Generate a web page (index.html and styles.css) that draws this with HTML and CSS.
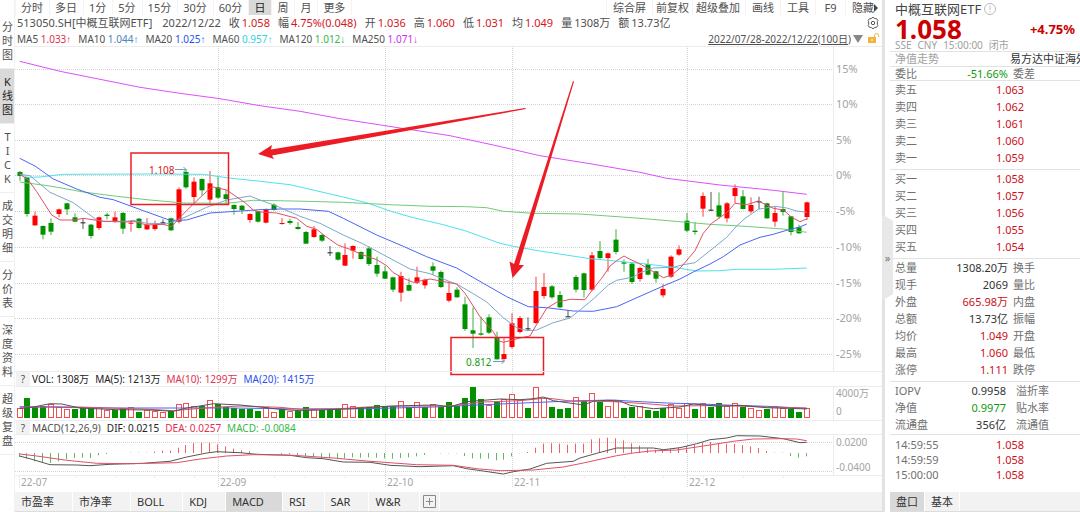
FILE: index.html
```html
<!DOCTYPE html>
<html lang="zh-CN">
<head>
<meta charset="utf-8">
<title>513050.SH 中概互联网ETF</title>
<link rel="stylesheet" href="styles.css">
</head>
<body>
<div class="app">
  <nav class="rail" aria-label="视图">
    <button class="rail-item rail-first">分时图</button>
    <button class="rail-item active">K线图</button>
    <button class="rail-item rail-latin">TICK</button>
    <button class="rail-item">成交明细</button>
    <button class="rail-item">分价表</button>
    <button class="rail-item">深度资料</button>
    <button class="rail-item">超级复盘</button>
  </nav>

  <main class="main">
    <div class="toolbar">
      <div class="periods">
        <button>分时</button><button>多日</button><button>1分</button><button>5分</button><button>15分</button><button>30分</button><button>60分</button><button class="active">日</button><button>周</button><button>月</button><button class="last">更多</button>
      </div>
      <div class="tools">
        <button>综合屏</button><button class="tight">前复权</button><button class="snug">超级叠加</button><button>画线</button><button>工具</button><button class="key">F9</button><button class="hide">隐藏<svg class="caret" viewBox="0 0 4 8" aria-hidden="true"><path d="M0 0L4 4L0 8z"/></svg></button>
      </div>
    </div>

    <div class="quote">
      <span class="symbol">513050.SH[中概互联网ETF]</span>
      <span class="date">2022/12/22</span>
      <span>收<b>1.058</b></span>
      <span>幅<b>4.75%(0.048)</b></span>
      <span>开<b>1.036</b></span>
      <span>高<b>1.060</b></span>
      <span>低<b>1.031</b></span>
      <span>均<b>1.049</b></span>
      <span>量<i>1308万</i></span>
      <span>额<i>13.73亿</i></span>
      <button class="gear" aria-label="设置"><svg viewBox="0 0 12 12"><path d="M4.2 1.7L5 .6h2l.8 1.1 1.7-.1 1.4 2-.6 1.1v2.6l.6 1.1-1.4 2-1.7-.1L7 11.4H5l-.8-1.1-1.7.1-1.4-2 .6-1.1V4.700L1.100 3.600l1.400-2z"/><circle cx="6" cy="6" r="1.700"/></svg></button>
    </div>

    <div class="averages">
      <span>MA5 <b class="ma5">1.033↑</b></span>
      <span>MA10 <b class="ma10">1.044↑</b></span>
      <span>MA20 <b class="ma20">1.025↑</b></span>
      <span>MA60 <b class="ma60">0.957↑</b></span>
      <span>MA120 <b class="ma120">1.012↓</b></span>
      <span>MA250 <b class="ma250">1.071↓</b></span>
      <div class="range">
        <button class="range-text">2022/07/28-2022/12/22(100日)</button>
        <svg class="drop" viewBox="0 0 10 8" aria-hidden="true"><path d="M0 0h10L5 8z"/></svg>
        <svg class="lock" viewBox="0 0 12 11" aria-hidden="true"><rect x="0" y="4" width="8" height="6" fill="#f5b13d"/><path d="M6.500 4V2.500a2 2 0 0 1 4 0V4" fill="none" stroke="#f5b13d"/><path d="M3.500 6h1v2h-1z" fill="#fff"/></svg>
      </div>
    </div>

    <svg class="pane" id="price" viewBox="15 46 867 325" role="img" aria-label="K线图">
      <g class="frame"><path d="M15 46.500H882M833.500 46V371"/></g>
      <g class="grid">
        <path d="M15 69.500H833M15 104.500H833M15 140.500H833M15 175.500H833M15 211.500H833M15 247.500H833M15 283.500H833M15 318.500H833M15 354.500H833"/>
        <path d="M218.500 46V371M385.500 46V371M512.500 46V371M687.500 46V371"/>
      </g>
      <g class="axis">
        <text x="836" y="73">15%</text><text x="836" y="108">10%</text><text x="836" y="144">5%</text><text x="836" y="179">0%</text><text x="836" y="215">-5%</text><text x="836" y="251">-10%</text><text x="836" y="287">-15%</text><text x="836" y="322">-20%</text><text x="836" y="358">-25%</text>
      </g>
      <g id="candles"></g>
      <g id="price-lines"></g>
      <g class="mark"><text class="high" x="149" y="174">1.108</text><path d="M175 169.500h11M183.500 167l2.500 2.500-2.500 2.500"/><text class="low" x="466" y="366">0.812</text><path d="M493 361.500h11M501.500 359l2.500 2.500-2.500 2.500"/></g>
      <g class="note-box"><rect x="131" y="153" width="97.500" height="51.500"/><rect x="451" y="337.500" width="92.500" height="37"/></g>
      <g class="note-arrow"><path d="M258 154L272 145L271 149.500L525 108L526 109L272 155.500L274 159z"/><path d="M512.500 278L509.500 261.500L514 264L573 81L574 81.500L519 265L524 265z"/></g>
    </svg>

    <div class="legend"><button class="help" aria-label="帮助">?</button><span class="ink">VOL: 1308万</span><span class="ink">MA(5): 1213万</span><span class="ma5">MA(10): 1299万</span><span class="ma20">MA(20): 1415万</span></div>

    <svg class="pane" id="volume" viewBox="15 386 867 34" role="img" aria-label="成交量">
      <g class="frame"><path d="M15 386.500H882M833.500 386V420"/></g>
      <g class="grid"><path d="M218.500 386V420M385.500 386V420M512.500 386V420M687.500 386V420"/></g>
      <g id="bars"></g>
      <g id="volume-lines"></g>
      <g class="axis"><text x="836" y="397">4000万</text><text x="836" y="415">0</text></g>
    </svg>

    <div class="legend"><button class="help" aria-label="帮助">?</button><span>MACD(12,26,9)</span><span class="ink">DIF: 0.0215</span><span class="ma5">DEA: 0.0257</span><span class="ma120">MACD: -0.0084</span></div>

    <svg class="pane" id="macd" viewBox="15 434 867 58" role="img" aria-label="MACD">
      <g class="frame"><path d="M15 434.500H882M833.500 434V475M15 475.500H882M19.500 475v13M75.500 475v3M115.500 475v3M154.500 475v3M194.500 475v3M234.500 475v3M274.500 475v3M305.500 475v3M345.500 475v3M425.500 475v3M464.500 475v3M504.500 475v3M544.500 475v3M584.500 475v3M624.500 475v3M663.500 475v3M703.500 475v3M743.500 475v3M783.500 475v3"/></g>
      <g class="grid"><path d="M15 442.500H833M15 471.500H833M218.500 434V488M385.500 434V488M512.500 434V488M687.500 434V488"/></g>
      <g id="sticks"></g>
      <g id="macd-lines"></g>
      <g class="axis"><text x="836" y="446">0.0200</text><text x="836" y="471">-0.0400</text><text x="21" y="486">22-07</text><text x="220" y="486">22-09</text><text x="387" y="486">22-10</text><text x="514" y="486">22-11</text><text x="689" y="486">22-12</text></g>
    </svg>

    <div class="tabs">
      <button>市盈率</button><button>市净率</button><button>BOLL</button><button>KDJ</button><button class="active">MACD</button><button>RSI</button><button>SAR</button><button>W&amp;R</button><button class="add" aria-label="添加指标"><svg viewBox="0 0 13 13"><path d="M.5.5h12v12H.5zM6.500 3v7M3 6.500h7"/></svg></button>
    </div>
  </main>

  <div class="divider"><button class="collapse" aria-label="收起">»</button></div>

  <aside class="side">
    <header class="head">
      <h1>中概互联网ETF <svg class="info" viewBox="0 0 12 12" aria-hidden="true"><circle cx="6" cy="6" r="5.500"/><path d="M6 2.500v4.500M6 8.200v1.300"/></svg></h1>
      <div class="last-price"><strong>1.058</strong><em>+4.75%</em></div>
      <p class="status"><span>SSE</span><span>CNY</span><span>15:00:00</span><span>闭市</span></p>
    </header>
    <div class="fund"><span>净值走势</span><a href="#fund">易方达中证海外</a></div>
    <table class="stats ratio"><tr><th>委比</th><td class="down">-51.66%</td><th>委差</th></tr></table>
    <table class="book">
      <tr><th>卖五</th><td>1.063</td></tr><tr><th>卖四</th><td>1.062</td></tr><tr><th>卖三</th><td>1.061</td></tr><tr><th>卖二</th><td>1.060</td></tr><tr><th>卖一</th><td>1.059</td></tr>
    </table>
    <table class="book">
      <tr><th>买一</th><td>1.058</td></tr><tr><th>买二</th><td>1.057</td></tr><tr><th>买三</th><td>1.056</td></tr><tr><th>买四</th><td>1.055</td></tr><tr><th>买五</th><td>1.054</td></tr>
    </table>
    <table class="stats">
      <tr><th>总量</th><td>1308.20万</td><th>换手</th></tr>
      <tr><th>现手</th><td>2069</td><th>量比</th></tr>
      <tr><th>外盘</th><td class="up">665.98万</td><th>内盘</th></tr>
      <tr><th>总额</th><td>13.73亿</td><th>振幅</th></tr>
      <tr><th>均价</th><td class="up">1.049</td><th>开盘</th></tr>
      <tr><th>最高</th><td class="up">1.060</td><th>最低</th></tr>
      <tr><th>涨停</th><td class="up">1.111</td><th>跌停</th></tr>
    </table>
    <table class="stats nav-stats">
      <tr><th>IOPV</th><td>0.9958</td><th>溢折率</th></tr>
      <tr><th>净值</th><td class="down">0.9977</td><th>贴水率</th></tr>
      <tr><th>流通盘</th><td>356亿</td><th>流通值</th></tr>
    </table>
    <table class="book trades">
      <tr><th>14:59:55</th><td>1.058</td></tr><tr><th>14:59:59</th><td>1.058</td></tr><tr><th>15:00:00</th><td>1.058</td></tr>
    </table>
    <div class="tabs side-tabs"><button class="active">盘口</button><button>基本</button></div>
  </aside>
</div>
<script src="chart.js"></script>
</body>
</html>
```
FILE: styles.css
```css
* { box-sizing: border-box; }
body {
  margin: 0;
  background: #fff;
  color: #505050;
  font: 11px/14px "Noto Sans", "Liberation Sans", "Noto Sans CJK SC", sans-serif;
}
button {
  margin: 0;
  padding: 0;
  border: 0;
  background: none;
  color: inherit;
  font: inherit;
  cursor: pointer;
  white-space: nowrap;
}
b, i, em { font-weight: 400; font-style: normal; }
a { color: inherit; text-decoration: none; }
.app { display: flex; min-height: 100vh; overflow: hidden; }

.rail {
  flex: 0 0 15px;
  min-width: 0;
  display: flex;
  flex-direction: column;
  border-right: 1px solid #f2f2f2;
}
.rail-item {
  padding: 6px 1px 6px 2px;
  border-bottom: 1px solid #eee;
  line-height: 14px;
  white-space: normal;
  overflow-wrap: anywhere;
}
.rail-first { padding-top: 20px; }
.rail-latin { padding-left: 4px; padding-right: 3px; }
.rail-item.active { background: #d9d9d9; color: #222; }

.main { flex: 1; min-width: 0; display: flex; flex-direction: column; }
.toolbar { display: flex; justify-content: space-between; height: 15px; }
.periods, .tools { display: flex; }
.toolbar button { padding: 0 6px; line-height: 15px; border-left: 1px solid #f4f4f4; }
.toolbar .periods button { padding: 0 6px 0 5px; }
.periods .last { border-right: 1px solid #f4f4f4; }
.toolbar .active { background: #d9d9d9; color: #222; }
.toolbar .tight { padding: 0 3px; }
.toolbar .snug { padding: 0 5px 0 3px; }
.toolbar .key { min-width: 30px; }
.toolbar .hide { padding-right: 4px; }
.caret { width: 4px; height: 8px; fill: #444; }

.quote { display: flex; align-items: center; gap: 8px; height: 16px; padding: 0 3px 0 2px; white-space: nowrap; }
.quote b { margin-left: 2px; color: #d4161c; }
.quote i { margin-left: 2px; }
.symbol { margin-right: 2px; }
.gear { margin-left: auto; width: 12px; height: 12px; }
.gear svg { display: block; fill: none; stroke: #555; }

.averages { display: flex; align-items: center; gap: 7px; height: 15px; padding: 0 2px; font-size: 10px; white-space: nowrap; }
.range { display: flex; align-items: center; gap: 2px; margin-left: auto; }
.range-text { text-decoration: underline; }
.drop { width: 10px; height: 8px; fill: #888; }
.lock { width: 12px; height: 11px; margin-left: 3px; }
.ma5 { color: #df3050; }
.ma10 { color: #4a86b8; }
.ma20 { color: #2a50f0; }
.ma60 { color: #30d0e0; }
.ma120 { color: #38b848; }
.ma250 { color: #d030f0; }
.ink { color: #222; }

.pane { display: block; width: 100%; height: auto; overflow: visible; }
.pane text { font-size: 11px; }
.frame path { fill: none; stroke: #ececec; }
.grid path { fill: none; stroke: #d4d4d4; stroke-dasharray: 1 1; }
.axis text { fill: #a4a4a4; }
#volume .axis text, #macd .axis text { font-size: 10px; }
.up-candle { fill: #fe0000; stroke: none; }
.down-candle { fill: #009000; stroke: none; }
.flat-candle { fill: #222; stroke: none; }
.hollow { fill: #fff; stroke: #f25050; }
.stick-up { fill: #f06060; }
.stick-down { fill: #60b860; }
.line { fill: none; stroke-width: 1; stroke-linejoin: round; }
.line-ma5 { stroke: #df5068; }
.line-ma10 { stroke: #7ba8cc; }
.line-ma20 { stroke: #4a66f4; }
.line-ma60 { stroke: #50e0ec; }
.line-ma120 { stroke: #70cc78; }
.line-ma250 { stroke: #dc50fa; }
.line-ink { stroke: #555; }
.mark path { fill: none; stroke: #6f9cc0; }
.mark .high { fill: #d4161c; }
.mark .low { fill: #189a18; }
.pane .mark text { font-size: 10px; }
.note-box rect { fill: none; stroke: #ed1c24; stroke-width: 1.5; }
.note-arrow path { fill: #ed1c24; }

.legend { display: flex; align-items: center; gap: 6px; height: 15px; border-top: 1px solid #ececec; font-size: 10px; white-space: nowrap; }
.legend + #macd { margin-top: -1px; }
.help { width: 14px; height: 14px; margin: 0 -4px 0 1px; background: #f2f2f2; line-height: 14px; }

.tabs { display: flex; height: 20px; margin-top: auto; background: #f2f2f2; border-bottom: 1px solid #ddd; color: #333; }
.tabs button { padding: 0 18px 0 6px; border-right: 1px solid #fff; }
.tabs .active { background: #d9d9d9; }
.tabs .add { padding: 0 3px; }
.add svg { display: block; width: 13px; height: 13px; fill: none; stroke: #888; }

.divider { position: relative; flex: 0 0 8px; border-left: 3px solid #e2e2e2; }
.collapse {
  position: absolute;
  left: -3px;
  top: 216px;
  width: 11px;
  height: 83px;
  background: #e8e8e8;
  clip-path: polygon(0 0, 27% 0, 100% 6%, 100% 94%, 27% 100%, 0 100%);
  color: #777;
}

.side { flex: 0 0 190px; display: flex; flex-direction: column; overflow: hidden; white-space: nowrap; }
.head { height: 52px; padding-left: 5px; border-bottom: 1px solid #e2e2e2; }
.head h1 { display: flex; align-items: center; gap: 3px; margin: 0; font-size: 13px; line-height: 18px; font-weight: 400; color: #444; }
.info { width: 12px; height: 12px; fill: none; stroke: #bbb; }
.last-price { display: flex; align-items: center; justify-content: space-between; height: 21px; padding-right: 5px; color: #cc0000; }
.last-price strong { font-size: 26px; line-height: 20px; }
.last-price em { font-size: 13px; font-weight: 700; }
.status { display: flex; gap: 6px; margin: 0; color: #a0a0a0; font-size: 10px; line-height: 12px; }
.fund { display: flex; height: 15px; padding-left: 5px; border-bottom: 1px solid #e2e2e2; color: #a0a0a0; }
.fund span { flex: 0 0 115px; }
.fund a { color: #333; }
.side table { width: 100%; table-layout: fixed; border-spacing: 0; border-bottom: 1px solid #e2e2e2; padding: 0 0 3px 5px; }
.side th, .side td { height: 17px; padding: 0; font-weight: 400; text-align: left; line-height: 17px; }
.side th { color: #707070; }
.stats th:first-child { width: 40px; }
.stats td { width: 73px; color: #333; }
.side .stats td { text-align: right; }
.side .stats th:last-child { padding-left: 5px; }
.side .stats .up, .book td { color: #cc1018; }
.side .stats .down { color: #109a10; }
.side .ratio { padding-bottom: 0; }
.side .ratio th, .side .ratio td { height: 13px; line-height: 13px; }
.side .nav-stats { padding-bottom: 1px; }
.nav-stats td { width: 71px; }
.side .nav-stats th:last-child { padding-left: 10px; }
.book th { width: 101px; }
.side .trades { border-bottom: 0; padding: 2px 0 0 5px; }
.side .trades th, .side .trades td { height: 15px; line-height: 15px; }
.side-tabs button { padding: 0 6px; }
```
FILE: chart.js
```js
const NS = 'http://www.w3.org/2000/svg';
const byId = id => document.getElementById(id);
const barX = i => Math.round(19.5 + 7.95 * i);

function add(parent, tag, attrs) {
  const el = document.createElementNS(NS, tag);
  Object.entries(attrs).forEach(([k, v]) => el.setAttribute(k, v));
  parent.appendChild(el);
}

// Kind, high, body top, body bottom, low; a third of a unit each, downwards from y = 130.
const candles = `G 123 126 138 152|G 140 142 252 260|R 245 257 286 288|G 286 288 314 328|G 265 279 305 315|R 236 238 252 262|G 218 220 238 255|G 250 262 275 275|K 265 277 277 297|G 282 284 318 326
R 260 262 294 300|G 248 254 258 268|R 245 262 275 278|G 246 249 296 312|R 274 278 281 305|G 264 266 294 296|R 264 284 298 300|R 272 284 297 302|K 268 277 277 285|G 263 265 301 303
R 172 178 275 280|G 118 126 172 176|R 142 155 201 220|G 145 147 181 196|R 123 160 209 220|G 137 172 203 207|G 180 193 207 225|G 223 225 237 254|G 225 227 240 252|R 250 252 270 278
G 243 244 275 278|R 235 238 278 280|G 220 224 240 242|R 264 279 282 284|G 266 273 279 284|G 276 291 297 299|G 303 306 341 341|R 288 298 321 323|G 312 315 332 336|K 348 367 367 378
G 365 367 389 392|R 340 375 407 408|R 346 348 362 386|G 364 366 387 389|G 348 355 402 408|G 380 405 431 440|G 408 424 446 447|G 440 442 479 486|R 425 438 488 515|G 445 465 482 484
R 410 442 458 462|R 446 449 466 476|G 397 409 422 435|G 421 426 471 474|R 458 489 512 517|G 472 479 502 503|G 500 523 597 603|G 532 601 611 654|G 560 610 614 617|G 553 562 608 612
G 605 622 688 688|R 625 672 687 695|R 550 580 651 656|R 558 564 606 610|K 562 595 595 603|R 440 483 579 582|R 429 471 498 506|G 465 469 502 506|G 483 495 532 535|K 540 559 559 561
G 435 441 479 487|G 428 430 480 503|R 366 376 479 483|G 333 363 384 390|R 368 370 384 425|G 298 329 366 373|G 388 397 401 425|G 398 401 456 462|R 410 414 447 455|G 387 402 434 436
G 422 424 446 458|R 462 477 496 503|R 376 380 440 444|R 346 358 374 377|G 249 272 302 306|G 276 302 306 314|R 187 198 236 260|K 186 239 239 243|G 187 226 260 265|R 216 220 265 277
R 163 174 198 219|G 180 199 237 238|R 202 225 244 250|K 200 214 214 237|G 218 220 265 266|R 230 249 275 290|G 186 237 246 257|G 258 259 306 316|G 284 292 310 311|R 215 217 261 270`
  .split(/[|\n]/).map(row => row.split(' '));
const styleOf = { R: 'up-candle', G: 'down-candle', K: 'flat-candle' };

candles.forEach(([kind, ...v], i) => {
  const [high, top, bottom, low] = v.map(n => 130 + n / 3);
  const x = barX(i);
  const cls = styleOf[kind];
  add(byId('candles'), 'rect', { class: cls, x: x - 0.5, y: high, width: 1, height: Math.max(1, low - high), opacity: 0.75 });
  add(byId('candles'), 'rect', { class: cls, x: x - 2.5, y: top, width: 5, height: Math.max(1, bottom - top) });
});

function line(group, cls, points, base, sign) {
  const n = points.trim().split(/[\s,]+/).map(Number);
  const out = [];
  for (let i = 0; i < n.length; i += 2) out.push((n[i] / 3).toFixed(1) + ',' + (base + sign * n[i + 1] / 3).toFixed(1));
  add(byId(group), 'polyline', { class: 'line ' + cls, points: out.join(' ') });
}

line('price-lines', 'line-ma250', '59,-206 180,-176 300,-152 420,-128 540,-110 660,-94 780,-73 900,-56 1020,-34 1200,-6 1240,0 1350,17 1480,45 1620,77 1770,101 1920,127 2000,145 2160,165 2320,181 2420,193', 130, 1);
line('price-lines', 'line-ma60', '59,133 82,142 120,141 190,133 450,132 610,133 680,143 780,154 870,164 1000,194 1100,218 1170,243 1240,263 1330,284 1400,304 1500,340 1540,349 1620,363 1770,386 1920,400 2020,412 2090,423 2160,422 2210,418 2320,418 2420,414', 130, 1);
line('price-lines', 'line-ma120', '59,156 150,168 250,186 350,199 450,210 550,219 680,220 760,211 880,213 1030,217 1170,224 1290,229 1400,230 1460,233 1510,244 1600,250 1740,252 1920,265 2060,277 2130,283 2220,288 2350,297 2420,307', 130, 1);
line('price-lines', 'line-ma20', '59,85 105,108 160,147 230,177 300,202 340,209 430,242 510,271 560,270 630,249 720,243 780,239 840,237 900,237 985,244 1030,265 1130,315 1210,349 1280,380 1370,414 1450,460 1520,500 1585,530 1640,533 1720,543 1780,544 1850,530 1920,499 1990,468 2040,447 2080,426 2130,402 2170,380 2220,345 2280,322 2320,313 2370,298 2400,291 2420,282', 130, 1);
line('price-lines', 'line-ma10', '59,133 90,137 150,187 220,218 290,270 310,274 380,274 400,271 440,280 500,281 530,272 570,255 620,232 680,210 750,198 780,210 830,228 900,259 960,280 1030,315 1090,342 1170,385 1230,417 1290,431 1350,455 1370,462 1420,491 1460,516 1510,563 1550,593 1580,602 1610,600 1660,578 1710,564 1740,540 1780,507 1825,465 1850,451 1900,441 1920,428 1960,414 2020,412 2050,404 2085,398 2130,362 2180,322 2210,288 2235,265 2275,238 2325,229 2360,234 2390,243 2420,247', 130, 1);
line('price-lines', 'line-ma5', '59,133 85,150 110,185 155,255 180,270 225,270 250,265 310,274 380,276 400,274 440,285 490,283 515,290 540,262 580,222 635,170 680,180 735,218 760,240 780,246 830,249 890,265 920,289 950,298 975,318 1015,346 1050,358 1090,375 1130,389 1160,407 1180,428 1215,447 1240,457 1290,447 1370,462 1395,490 1440,560 1480,605 1495,632 1510,637 1560,624 1590,618 1600,600 1640,535 1670,517 1710,508 1755,509 1780,476 1805,445 1830,408 1850,392 1872,378 1890,388 1920,402 1960,425 1990,443 2015,435 2040,415 2085,362 2110,310 2135,280 2180,248 2205,220 2240,224 2275,213 2320,235 2350,240 2375,262 2400,275 2420,267', 130, 1);

const volumes = ('R31 G59 G34 G36 R43 R34 R28 G26 G30 G29 R33 R23 G24 G29 R34 G18 R25 R20 R19 G20 R43 R46 R36 G36 R53 G43 G34 G30 G28 G28 G22 R34 R18 G26 R20 G22 G33 R27 G25 G28 G27 R43 R37 G33 G34 G38 G35 G36 R50 G33 ' +
  'R49 G32 R41 G32 G47 G36 G60 G93 G58 R40 G49 R58 R73 R53 G31 R94 R61 G33 G26 G30 R63 G52 R76 G49 R37 R52 G29 G34 R36 G24 G20 G31 R43 R30 R46 G26 R46 G33 G45 R36 R45 G33 R31 R25 G26 R37 R31 G28 G17 R31').split(' ');
volumes.forEach((item, i) => {
  const h = Math.round(item.slice(1) / 3);
  if (item[0] === 'G') add(byId('bars'), 'rect', { class: 'down-candle', x: barX(i) - 3, y: 418 - h, width: 6, height: h });
  else add(byId('bars'), 'rect', { class: 'hollow', x: barX(i) - 2.5, y: 418.5 - h, width: 5, height: h - 1 });
});
line('volume-lines', 'line-ma20', '59,34 300,30 700,30 900,27 1100,28 1300,33 1500,42 1640,48 1740,52 1840,54 1900,50 2000,45 2100,42 2200,38 2300,35 2420,29', 418, -1);
line('volume-lines', 'line-ma5', '59,32 150,34 240,33 450,26 520,22 640,32 720,36 840,32 900,26 1000,27 1100,33 1200,36 1350,36 1450,48 1560,52 1640,60 1720,50 1780,51 1860,48 1950,42 2020,36 2120,37 2200,36 2300,33 2420,30', 418, -1);
line('volume-lines', 'line-ink', '59,28 100,33 150,43 185,42 240,30 350,25 450,24 520,20 560,30 600,36 640,43 720,39 780,33 840,26 900,22 960,24 1060,28 1160,35 1260,38 1310,39 1350,33 1400,49 1450,53 1500,57 1560,55 1600,58 1630,63 1660,52 1750,39 1780,50 1820,53 1860,51 1890,38 1960,28 2040,33 2080,42 2160,35 2220,38 2300,31 2400,28 2420,27', 418, -1);

const sticks = [-12, -17, -25, -28, -30, -25, -19, -15, -14, -15, -7, -3, 0, 0, 1, 1, 1, 4, 7, 7, 16, 24, 29, 31, 31, 26, 20, 13, 8, 5, 1, 0, 0, -3, -3, -6,
  -10, -12, -14, -16, -17, -16, -13, -14, -13, -14, -16, -17, -15, -13, -10, -6, 0, -1, -1, -1, -9, -16, -17, -17, -22, -20, -10, -1, 3, 16, 28, 29, 28, 25, 28, 28,
  41, 44, 46, 44, 38, 29, 22, 14, 10, 8, 12, 17, 20, 24, 31, 33, 29, 28, 28, 24, 20, 15, 6, 1, 1, -9, -14, -10];
sticks.forEach((v, i) => {
  const h = Math.abs(v) / 3;
  add(byId('sticks'), 'rect', { class: v > 0 ? 'stick-up' : 'stick-down', x: barX(i) - 1, y: v > 0 ? 453 - h : 453, width: 1, height: h });
});
line('macd-lines', 'line-ink', '59,9 100,20 150,35 230,36 270,38 330,34 430,31 510,25 560,12 620,0 650,-4 720,-1 770,4 870,7 920,14 970,17 1030,27 1110,28 1170,37 1260,41 1360,38 1400,47 1450,54 1510,63 1540,56 1590,48 1640,31 1720,25 1740,15 1790,1 1850,-15 1960,-15 1990,-10 2040,-16 2090,-28 2130,-40 2180,-45 2210,-52 2280,-51 2350,-43 2400,-31 2420,-32', 453, 1);
line('macd-lines', 'line-ma5', '59,3 110,9 200,22 290,31 400,32 530,29 600,18 680,9 760,5 850,6 880,7 1000,15 1100,24 1250,35 1360,37 1430,47 1500,53 1600,51 1690,42 1740,32 1850,8 1900,0 1950,-6 2030,-9 2110,-21 2200,-35 2260,-42 2340,-43 2390,-42 2420,-37', 453, 1);
```
